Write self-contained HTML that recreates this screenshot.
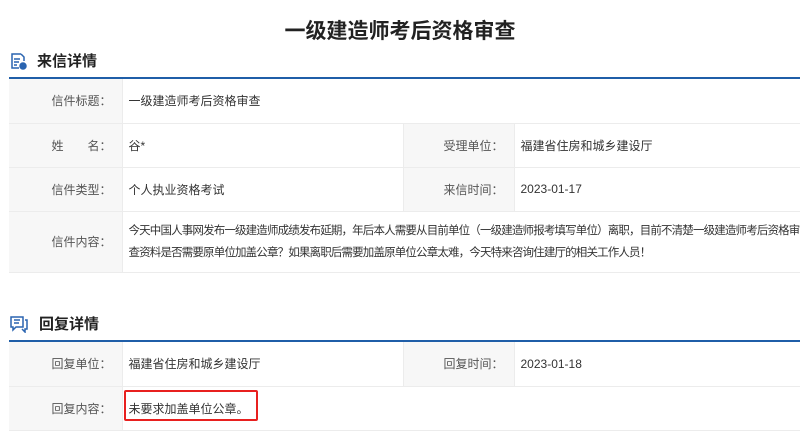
<!DOCTYPE html>
<html><head><meta charset="utf-8"><style>
*{margin:0;padding:0;box-sizing:border-box}
body{width:800px;height:433px;overflow:hidden;background:#fff;font-family:"Liberation Sans","Noto Sans CJK SC",sans-serif;color:#333;position:relative}
.title{position:absolute;top:15px;left:0;width:800px;text-align:center;font-size:21px;font-weight:bold;color:#222}
.h{position:absolute;left:9px;font-size:15px;font-weight:bold;color:#222;display:flex;align-items:center}
.h svg{margin-right:10px}
table{position:absolute;left:9px;width:800px;border-collapse:collapse;border-top:2px solid #1f5ea8;font-size:12px}
td{border-bottom:1px solid #ececec;vertical-align:middle;padding:0 6px}
td.l{background:#f7f7f7;text-align:right;color:#555;border-right:1px solid #ececec;padding-right:10px}
td.v{color:#333}
</style></head><body>
<div class="title">一级建造师考后资格审查</div>
<div class="h" style="top:50px"><svg width="18" height="18" viewBox="0 0 18 18" fill="none" stroke="#2a64b0" stroke-width="1.5"><path d="M12 2H3v14h7M12 2l3 3v4"/><path d="M5 7h6M5 10h5M5 13h3"/><circle cx="14" cy="14" r="3" fill="#2a64b0"/></svg>来信详情</div>
<table style="top:77px">
<tr style="height:45px"><td class="l" style="width:113px">信件标题：</td><td class="v" colspan="3">一级建造师考后资格审查</td></tr>
<tr style="height:44px"><td class="l">姓　　名：</td><td class="v" style="width:281px;border-right:1px solid #ececec">谷*</td><td class="l" style="width:111px">受理单位：</td><td class="v">福建省住房和城乡建设厅</td></tr>
<tr style="height:44px"><td class="l">信件类型：</td><td class="v" style="border-right:1px solid #ececec">个人执业资格考试</td><td class="l">来信时间：</td><td class="v">2023-01-17</td></tr>
<tr style="height:61px"><td class="l">信件内容：</td><td class="v" colspan="3" style="line-height:22px;padding-right:0;font-size:11.5px;letter-spacing:-0.85px">今天中国人事网发布一级建造师成绩发布延期，年后本人需要从目前单位（一级建造师报考填写单位）离职，目前不清楚一级建造师考后资格审查资料是否需要原单位加盖公章？如果离职后需要加盖原单位公章太难，今天特来咨询住建厅的相关工作人员！</td></tr>
</table>
<div class="h" style="top:313px"><svg width="20" height="18" viewBox="0 0 20 18" fill="none" stroke="#2a64b0" stroke-width="1.5"><path d="M2 2h12v10H7l-3 3v-3H2z"/><path d="M5 5h6M5 8h5"/><path d="M16 5h2v9h-2v3l-3-3"/></svg>回复详情</div>
<table style="top:340px">
<tr style="height:45px"><td class="l" style="width:113px">回复单位：</td><td class="v" style="width:281px;border-right:1px solid #ececec">福建省住房和城乡建设厅</td><td class="l" style="width:111px">回复时间：</td><td class="v">2023-01-18</td></tr>
<tr style="height:44px"><td class="l">回复内容：</td><td class="v" colspan="3">未要求加盖单位公章。</td></tr>
</table>
<div style="position:absolute;left:124px;top:390px;width:134px;height:31px;border:2px solid #e8201f;border-radius:2px"></div>
</body></html>
